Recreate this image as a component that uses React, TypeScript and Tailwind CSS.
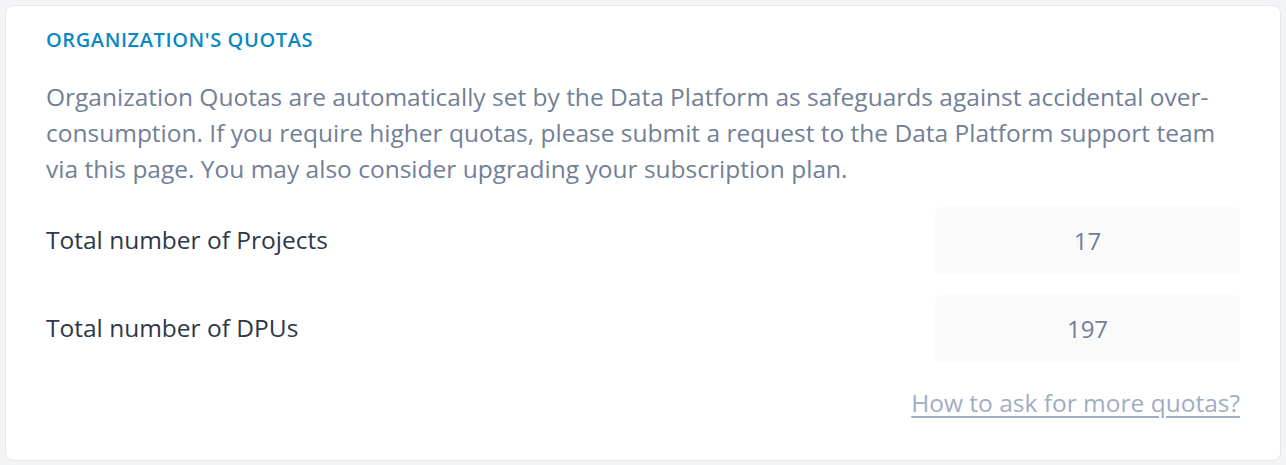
import React from 'react';

const quotas = [
  { label: 'Total number of Projects', value: '17' },
  { label: 'Total number of DPUs', value: '197' },
];

const App: React.FC = () => {
  return (
    <div className="min-h-[465px] bg-[#f3f4f6] p-[5px] font-['Open_Sans',sans-serif]">
      <div className="rounded-lg border border-[#e5e7eb] bg-white px-[40px] pt-[19px] pb-[39px]">
        <h2 className="text-[20px] font-semibold leading-[30px] tracking-[0.6px] text-[#0a88c4]">ORGANIZATION'S QUOTAS</h2>
        <p className="mt-[24px] text-[24.5px] leading-[36px] text-[#718096]">
          Organization Quotas are automatically set by the Data Platform as safeguards against accidental over-consumption. If you require higher quotas, please submit a request to the Data Platform support team via this page. You may also consider upgrading your subscription plan.
        </p>
        <div className="mt-[20px] flex flex-col gap-[21px]">
          {quotas.map((q) => (
            <div key={q.label} className="flex items-center justify-between">
              <span className="text-[24.5px] text-[#2d3748]">{q.label}</span>
              <div className="flex h-[67px] w-[305px] items-center justify-center rounded-md bg-[#fafafa] text-[24px] text-[#718096]">
                {q.value}
              </div>
            </div>
          ))}
        </div>
        <div className="mt-[23px] flex justify-end">
          <a href="#" className="text-[24.5px] leading-[36px] text-[#a0aec0] underline underline-offset-4">
            How to ask for more quotas?
          </a>
        </div>
      </div>
    </div>
  );
};

export default App;
